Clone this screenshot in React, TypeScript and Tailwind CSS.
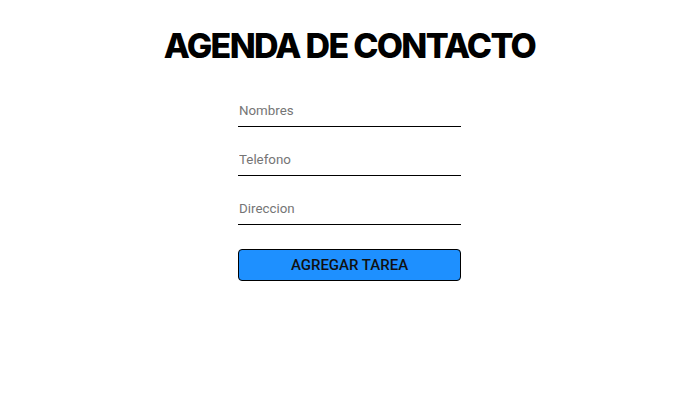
export default function App() {
  return (
    <div className="min-h-[406px] w-full bg-white flex flex-col items-center pl-[23px]" style={{ fontFamily: "Roboto, 'Liberation Sans', sans-serif" }}>
      <h1 className="mt-[24px] text-[34px] leading-[44px] font-extrabold text-black tracking-[-1.7px]" style={{ fontFamily: "Inter, 'Liberation Sans', sans-serif" }}>
        AGENDA DE CONTACTO
      </h1>
      <form className="mt-[26px] w-[223px] flex flex-col gap-[16px]" onSubmit={(e) => e.preventDefault()}>
        <input
          type="text"
          placeholder="Nombres"
          className="h-[33px] w-full border-b border-black px-[1px] text-[13.333px] text-black outline-none placeholder:text-[#757575]"
        />
        <input
          type="text"
          placeholder="Telefono"
          className="h-[33px] w-full border-b border-black px-[1px] text-[13.333px] text-black outline-none placeholder:text-[#757575]"
        />
        <input
          type="text"
          placeholder="Direccion"
          className="h-[33px] w-full border-b border-black px-[1px] text-[13.333px] text-black outline-none placeholder:text-[#757575]"
        />
        <button
          type="submit"
          className="mt-[8px] h-[32px] w-full rounded-[4px] border border-black bg-[#1e90ff] text-[15px] font-medium text-[#111]"
        >
          AGREGAR TAREA
        </button>
      </form>
    </div>
  );
}
